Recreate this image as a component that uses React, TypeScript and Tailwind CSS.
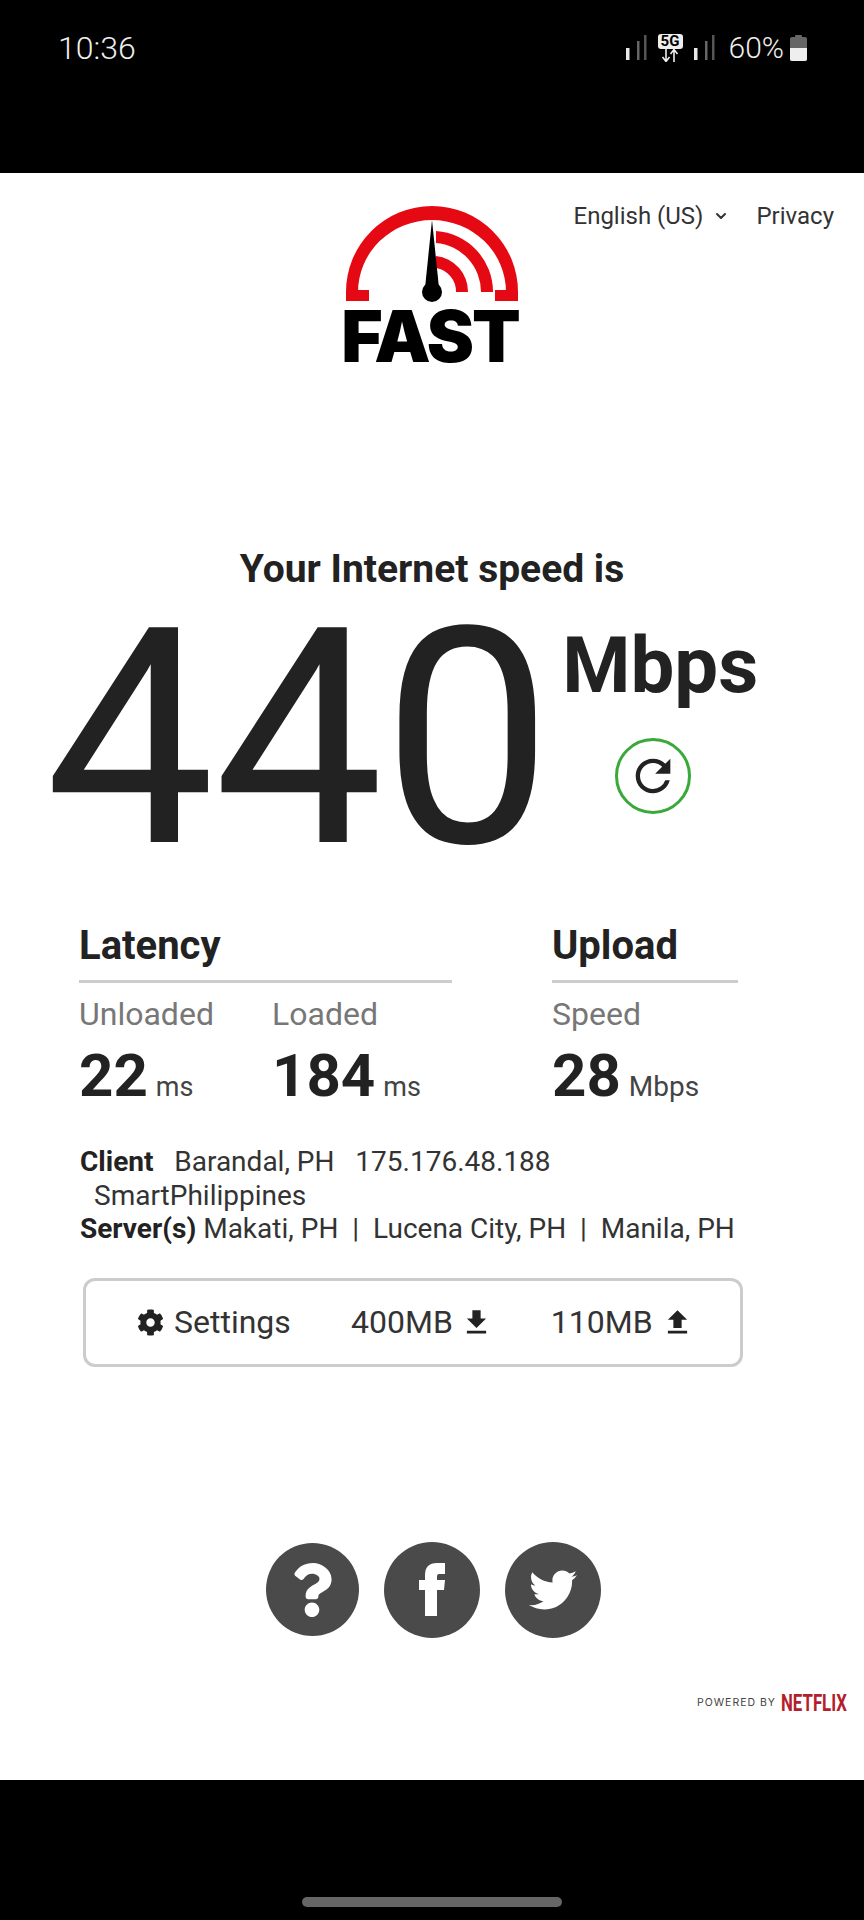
import { FaCog, FaQuestion, FaTwitter } from "react-icons/fa";
import { MdFileDownload, MdFileUpload, MdRefresh } from "react-icons/md";
import { LuChevronDown } from "react-icons/lu";

const roboto = "font-[Roboto,sans-serif]";

function SignalBars({ className }: { className: string }) {
  return (
    <svg width="21" height="25" viewBox="0 0 21 25" className={className}>
      <rect x="0" y="13" width="3.500" height="12" fill="#e8e8e8" />
      <rect x="11" y="6" width="2.500" height="19" fill="#666" />
      <rect x="18" y="0" width="2.500" height="25" fill="#555" />
    </svg>
  );
}

function FiveG() {
  return (
    <div className="ml-[11px] flex w-[25px] flex-col items-center">
      <div className="flex h-[15px] w-[25px] items-center justify-center rounded-[3px] bg-[#eee] text-[15px] font-bold leading-none text-black">
        5G
      </div>
      <svg width="22" height="13" viewBox="0 0 22 13" fill="none" stroke="#eee" strokeWidth="1.600">
        <path d="M7 0v12M3.500 8 7 12.500l3.500-4.500" />
        <path d="M15 13V1M11.500 5 15 .5l3.500 4.500" />
      </svg>
    </div>
  );
}

function Battery() {
  return (
    <svg width="17" height="26" viewBox="0 0 17 26" className="ml-[6px] mt-[1px]">
      <rect x="5" y="0" width="7" height="3" rx="1" fill="#666" />
      <rect x="0" y="2" width="17" height="24" rx="2" fill="#666" />
      <path d="M0 13h17v11a2 2 0 0 1-2 2H2a2 2 0 0 1-2-2z" fill="#eee" />
    </svg>
  );
}

function StatusBar() {
  return (
    <div className={`flex h-[173px] items-start justify-between bg-black pl-[58px] pr-[57px] pt-[30px] ${roboto} text-[#eee]`}>
      <span className="text-[32px] font-light leading-[36px]">10:36</span>
      <div className="flex items-start pt-[4px]">
        <SignalBars className="mt-[1px]" />
        <FiveG />
        <SignalBars className="ml-[11px] mt-[1px]" />
        <span className="-mt-[1px] ml-[14px] text-[30px] font-light leading-[30px]">60%</span>
        <Battery />
      </div>
    </div>
  );
}

function FastLogo() {
  return (
    <div className="flex w-[172px] flex-col items-center">
      <svg width="172" height="96" viewBox="346 206 172 96">
        <path
          d="M346 301V292A86 86 0 0 1 518 292V301H495V290H506V292A74 72 0 0 0 358 292V290H369V301Z"
          fill="#e50914"
        />
        <path d="M436 231A61 61 0 0 1 493 292H481A49 49 0 0 0 436 243Z" fill="#e50914" />
        <path d="M436 256A36 36 0 0 1 468 292H456A24 24 0 0 0 436 268Z" fill="#e50914" />
        <path d="M432 220 L439 288 H425Z" fill="#000" />
        <circle cx="432" cy="292" r="10" fill="#000" />
      </svg>
      <div className="mt-[4px] -translate-x-[2px] font-[Inter,sans-serif] text-[71px] font-black leading-[60px] tracking-[-2px] text-black">
        FAST
      </div>
    </div>
  );
}

function Metric({ label, value, unit, unitSize, width }: { label: string; value: string; unit: string; unitSize: string; width: string }) {
  return (
    <div className={width}>
      <div className="text-[32px] leading-[36px] text-[#777]">{label}</div>
      <div className="mt-[10px] flex items-baseline gap-[8px] leading-[68px]">
        <span className="text-[60px] font-bold text-[#222]">{value}</span>
        <span className={`${unitSize} text-[#444]`}>{unit}</span>
      </div>
    </div>
  );
}

function SocialButton({ size, children }: { size: string; children: React.ReactNode }) {
  return (
    <div className={`flex items-center justify-center rounded-full bg-[#4a4a4a] text-white ${size}`}>
      {children}
    </div>
  );
}

export default function App() {
  return (
    <div className={`flex h-[1920px] w-[864px] flex-col overflow-hidden bg-black ${roboto}`}>
      <StatusBar />

      <main className="flex-1 bg-white text-[#222]">
        <header className="grid grid-cols-[1fr_172px_1fr] pt-[33px]">
          <div />
          <FastLogo />
          <div className="flex items-start justify-end gap-[27px] pr-[30px] text-[24px] leading-[20px] text-[#333]">
            <span className="flex items-center gap-[10px] whitespace-nowrap">
              English (US)
              <LuChevronDown size={16} strokeWidth={3} />
            </span>
            <span>Privacy</span>
          </div>
        </header>

        <h1 className="mt-[181px] text-center text-[39px] font-bold leading-[44px]">Your Internet speed is</h1>

        <div className="mt-[13px] flex pl-[45px]">
          <div className="h-[270px] text-[302px] leading-[270px] tracking-[-1px] text-[#222]">440</div>
          <div className="flex flex-col items-start pl-[11px] pt-[17px]">
            <div className="text-[78px] font-bold leading-[90px]">Mbps</div>
            <div className="ml-[53px] mt-[27px] flex h-[76px] w-[76px] items-center justify-center rounded-full border-[3px] border-[#3aa93a]">
              <MdRefresh size={52} className="text-[#222]" />
            </div>
          </div>
        </div>

        <div className="mt-[50px] flex pl-[79px]">
          <section className="w-[373px]">
            <h2 className="border-b-[3px] border-[#ccc] pb-[12px] text-[40px] font-bold leading-[44px]">Latency</h2>
            <div className="mt-[13px] flex">
              <Metric label="Unloaded" value="22" unit="ms" unitSize="text-[27px]" width="w-[193px]" />
              <Metric label="Loaded" value="184" unit="ms" unitSize="text-[27px]" width="w-[180px]" />
            </div>
          </section>
          <section className="ml-[100px] w-[186px]">
            <h2 className="border-b-[3px] border-[#ccc] pb-[12px] text-[40px] font-bold leading-[44px]">Upload</h2>
            <div className="mt-[13px] flex whitespace-nowrap">
              <Metric label="Speed" value="28" unit="Mbps" unitSize="text-[28px]" width="w-[186px]" />
            </div>
          </section>
        </div>

        <div className="mt-[24px] pl-[80px] text-[28px] leading-[33.500px] text-[#333]">
          <div className="whitespace-pre">
            <b className="font-bold text-[#222]">Client</b>
            {"   Barandal, PH   175.176.48.188"}
          </div>
          <div className="pl-[14px]">SmartPhilippines</div>
          <div className="whitespace-pre">
            <b className="font-bold text-[#222]">Server(s)</b>
            {" Makati, PH  |  Lucena City, PH  |  Manila, PH"}
          </div>
        </div>

        <div className="ml-[83px] mt-[32px] flex h-[89px] w-[660px] items-center rounded-[12px] border-[3px] border-[#ccc] pl-[51px] text-[32px] text-[#333]">
          <FaCog size={27} className="text-[#222]" />
          <span className="ml-[10px] w-[177px]">Settings</span>
          <span>400MB</span>
          <MdFileDownload size={33} className="ml-[7px] text-[#222]" />
          <span className="ml-[58px]">110MB</span>
          <MdFileUpload size={33} className="ml-[8px] text-[#222]" />
        </div>

        <div className="mt-[175px] flex items-center justify-center gap-[25px] pl-[2px]">
          <SocialButton size="h-[93px] w-[93px]">
            <FaQuestion size={54} />
          </SocialButton>
          <SocialButton size="h-[96px] w-[96px]">
            <svg width="26" height="53" viewBox="0 0 26 53" fill="currentColor">
              <path d="M6 53V27H0V17H6V12C6 4 10 0 18 0H26V11H20C18.500 11 18 12 18 14V17H26L25 27H18V53Z" />
            </svg>
          </SocialButton>
          <SocialButton size="h-[96px] w-[96px]">
            <FaTwitter size={48} />
          </SocialButton>
        </div>

        <div className="mt-[53px] flex items-center justify-end pr-[18px]">
          <span className="font-[Inter,sans-serif] text-[10.500px] tracking-[1px] text-[#444]">POWERED BY</span>
          <span className="ml-[5px] w-[65px] origin-left scale-x-[0.7] whitespace-nowrap text-[24px] font-bold leading-[24px] text-[#b3202c]">
            NETFLIX
          </span>
        </div>
      </main>

      <div className="flex h-[140px] items-end justify-center bg-black pb-[13px]">
        <div className="h-[10px] w-[260px] rounded-full bg-[#666]" />
      </div>
    </div>
  );
}
